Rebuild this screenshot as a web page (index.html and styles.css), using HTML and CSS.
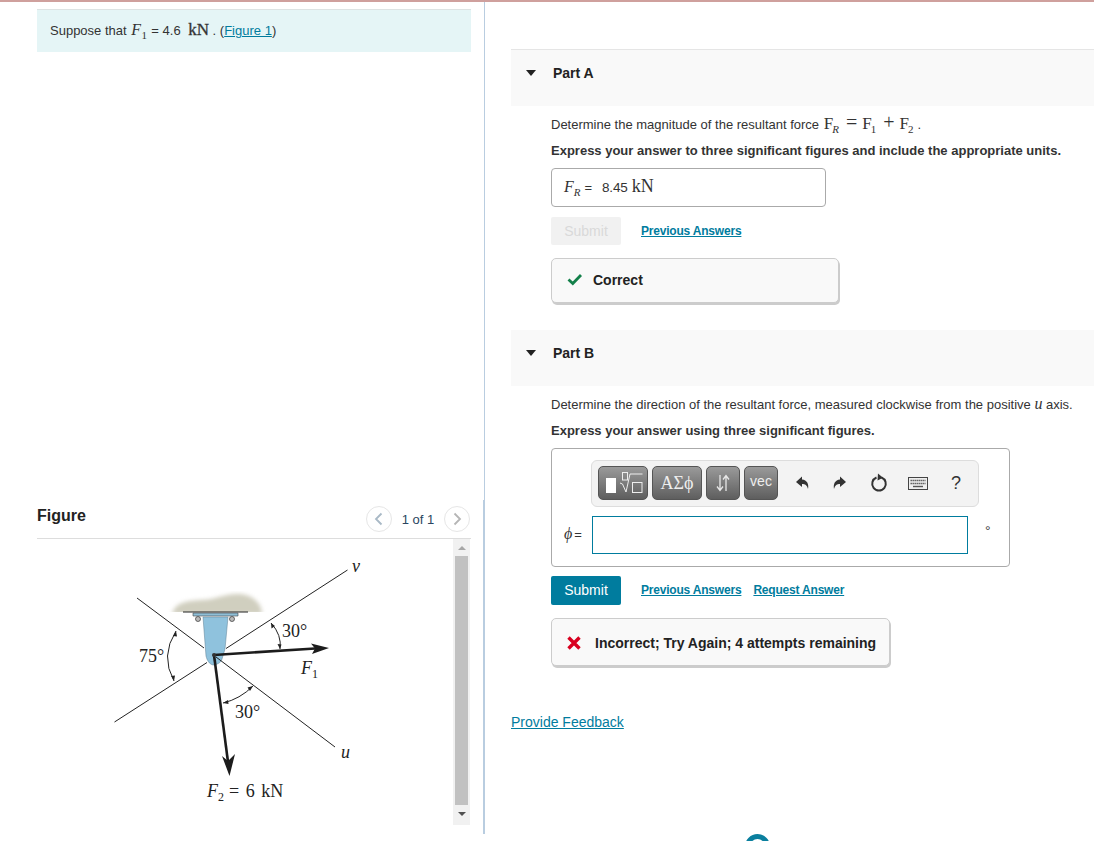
FILE: index.html
```html
<!DOCTYPE html>
<html lang="en">
<head>
<meta charset="utf-8">
<title>Part A and Part B</title>
<link rel="stylesheet" href="styles.css">
</head>
<body>
<div class="top-rule"></div>
<main class="main">
  <section class="left">
    <div class="prompt">Suppose that <span class="math math-f1"><i>F</i><sub>1</sub></span> = 4.6 <span class="math unit">kN</span> . (<a href="#">Figure 1</a>)</div>
    <div class="figure-head">
      <h2 class="figure-title">Figure</h2>
      <div class="pager">
        <span class="page-btn"><svg width="12" height="14" viewBox="0 0 12 14"><path d="M8.500 1.500 3 7l5.500 5.500" fill="none" stroke="#a9b9c6" stroke-width="1.800"/></svg></span>
        <span class="page-count">1 of 1</span>
        <span class="page-btn"><svg width="12" height="14" viewBox="0 0 12 14"><path d="M3.500 1.500 9 7l-5.500 5.500" fill="none" stroke="#b5b5b5" stroke-width="1.800"/></svg></span>
      </div>
    </div>
    <div class="figure-body">
      <svg class="diagram" width="416" height="286" viewBox="37 539 416 286">
        <defs>
          <filter id="soft"><feGaussianBlur stdDeviation="2"/></filter>
          <clipPath id="ceil"><rect x="160" y="585" width="110" height="27"/></clipPath>
        </defs>
        <g clip-path="url(#ceil)"><path d="M172 614C175 603 185 601 200 600 215 600 225 593 240 594 252 595 262 603 262 614z" fill="#d0cfbf" filter="url(#soft)"/></g>
        <path d="M183 612h65" stroke="#222" stroke-width="1"/>
        <path d="M193 613h45v3h-45z" fill="#8fbfd8" stroke="#444" stroke-width=".6"/>
        <circle cx="198" cy="619" r="2.500" fill="#bbb" stroke="#333" stroke-width=".7"/>
        <circle cx="232" cy="619" r="2.500" fill="#bbb" stroke="#333" stroke-width=".7"/>
        <path d="M203 617h25l-3 32-3 10c-1 4-6 6-9 6-4-1-6-5-7-9z" fill="#8fc2dd" stroke="#5d7f92" stroke-width=".5"/>
        <g fill="none" stroke="#222" stroke-width="1">
          <path d="M114.500 722 207 662.500M226 648.500 347.500 570"/>
          <path d="M137 598 204 648M216 657 335 747"/>
          <path d="M176 631Q160 656 174 681"/>
          <path d="M271 623Q282 635 280 649"/>
          <path d="M253 686Q240 699 223 703"/>
        </g>
        <g fill="#222">
          <path d="M176 631l-3 5 4 .5zM174 681l-3-5 4-.5zM271 623l.500 5.500 3.500-2.500zM280 649l-2.500-5 4 .5zM253 686l-5.500 1.500 2.500 3.500zM223 703l5-3 .500 4z"/>
        </g>
        <path d="M214 655 315 648.500" stroke="#1c1c1c" stroke-width="2.600"/>
        <path d="M329 648 311 643.500 315 648.500 312 654z" fill="#1c1c1c"/>
        <path d="M214 655 228 762" stroke="#1c1c1c" stroke-width="2.600"/>
        <path d="M229.500 776 222 756 228 761 235 754z" fill="#1c1c1c"/>
        <circle cx="214" cy="655" r="2" fill="#333"/>
        <g class="fig-text">
          <text x="352" y="572" font-style="italic">v</text>
          <text x="341" y="758" font-style="italic">u</text>
          <text x="282" y="637">30°</text>
          <text x="301" y="674" font-style="italic">F<tspan class="fig-sub" dy="4" font-style="normal">1</tspan></text>
          <text x="139" y="662">75°</text>
          <text x="235" y="718">30°</text>
          <text x="207" y="797" font-style="italic">F<tspan class="fig-sub" dy="4" font-style="normal">2</tspan><tspan class="fig-eq" dy="-4" dx="5" font-style="normal">= 6 kN</tspan></text>
        </g>
      </svg>
      <div class="scrollbar">
        <span class="arrow-up"></span>
        <span class="thumb"></span>
        <span class="arrow-down"></span>
      </div>
    </div>
  </section>
  <div class="divider"></div>
  <section class="right">
    <div class="part-head part-first"><span class="caret"></span><h3 class="part-title">Part A</h3></div>
    <div class="part-body">
      <p class="line">Determine the magnitude of the resultant force <span class="math eqn">F<sub><i>R</i></sub><span class="op">=</span>F<sub>1</sub><span class="op">+</span>F<sub>2</sub></span><span class="dot">.</span></p>
      <p class="line gap strong">Express your answer to three significant figures and include the appropriate units.</p>
      <div class="answer"><span class="math"><i>F<sub>R</sub></i></span> <span class="eq">=</span> <span class="val">8.45</span> <span class="math unit-answer">kN</span></div>
      <div class="actions first-actions">
        <span class="btn btn-off">Submit</span>
        <a class="act-link" href="#">Previous Answers</a>
      </div>
      <div class="feedback fb-ok">
        <svg width="16" height="13" viewBox="0 0 16 13"><path d="M1.500 6.500 5.800 10.500 14 2" fill="none" stroke="#13804a" stroke-width="2.800"/></svg>
        <span>Correct</span>
      </div>
    </div>
    <div class="part-head part-second"><span class="caret"></span><h3 class="part-title">Part B</h3></div>
    <div class="part-body">
      <p class="line">Determine the direction of the resultant force, measured clockwise from the positive <span class="math"><i>u</i></span> axis.</p>
      <p class="line gap strong">Express your answer using three significant figures.</p>
      <div class="editor">
        <div class="toolbar">
          <span class="tool tool-tmpl">
            <svg width="40" height="28" viewBox="0 0 40 28"><rect x="3" y="9" width="10" height="15" fill="#fff"/><g fill="none" stroke="#eee" stroke-width="1"><rect x="29.500" y="13.500" width="9.500" height="10"/><rect x="19.500" y="3.500" width="5" height="7.500"/><path d="M17 14l2.500 1 3.500 8 4-18h12.500"/></g></svg>
          </span>
          <span class="tool tool-greek">ΑΣϕ</span>
          <span class="tool tool-arrows"><svg width="16" height="20" viewBox="0 0 16 20"><g fill="none" stroke="#e8e8e8" stroke-width="1.300"><path d="M5 2v15M2 13.500l3 4 3-4M11 18V3M8 6.500l3-4 3 4"/></g></svg></span>
          <span class="tool tool-vec">vec</span>
          <span class="tool-icons">
            <svg width="16" height="16" viewBox="0 0 16 16"><path d="M7 1.500 1 7l6 5V9c3 0 5 1 6 5 1-5-1-9-6-9.500z" fill="#333"/></svg>
            <svg width="16" height="16" viewBox="0 0 16 16"><path d="M9 1.500 15 7l-6 5V9c-3 0-5 1-6 5-1-5 1-9 6-9.500z" fill="#333"/></svg>
            <svg class="icon-reset" width="18" height="20" viewBox="0 0 18 20"><path d="M11.500 4.500a6.800 6.800 0 1 1-5 0" fill="none" stroke="#333" stroke-width="2"/><path d="M8 .500 13 4.800 7.500 7.500z" fill="#333"/></svg>
            <svg width="20" height="13" viewBox="0 0 20 13"><rect x=".5" y=".5" width="19" height="12" fill="#eee" stroke="#444"/><path d="M2.500 3.500h15M2.500 6.500h15" stroke="#555" stroke-width="1.400" stroke-dasharray="1.400 .6"/><path d="M5 9.500h10" stroke="#555" stroke-width="1.400"/></svg>
            <span class="help">?</span>
          </span>
        </div>
        <div class="input-row">
          <span class="phi"><i>ϕ</i><span class="eq">=</span></span>
          <span class="text-input"></span>
          <span class="degree">°</span>
        </div>
      </div>
      <div class="actions second-actions">
        <span class="btn btn-on">Submit</span>
        <a class="act-link" href="#">Previous Answers</a>
        <a class="act-link" href="#">Request Answer</a>
      </div>
      <div class="feedback fb-bad">
        <svg width="14" height="14" viewBox="0 0 14 14"><path d="M1.500 1.500 12.500 12.500M12.500 1.500 1.500 12.500" stroke="#d8001f" stroke-width="3.400"/></svg>
        <span>Incorrect; Try Again; 4 attempts remaining</span>
      </div>
    </div>
    <a class="provide" href="#">Provide Feedback</a>
  </section>
</main>
<span class="help-bubble"></span>
</body>
</html>
```
FILE: styles.css
```css
* { box-sizing: border-box; }
html, body { margin: 0; padding: 0; height: 841px; overflow: hidden; background: #fff; }
body { font-family: "Liberation Sans", Arial, sans-serif; font-size: 14px; color: #333; position: relative; }
a { color: #007c9e; }
p, h2, h3 { margin: 0; }

.top-rule { height: 2px; background: #cfa09d; }
.main { display: flex; height: 832px; }

.left { width: 483px; padding: 7px 12px 0 37px; flex: none; }
.prompt { height: 43px; border-top: 1px solid #dde3e3; background: #e5f5f6; padding-left: 13px; line-height: 41px; white-space: nowrap; font-size: 13px; }
.math { font-family: "Liberation Serif", serif; font-size: 16px; line-height: 0; }
.math sub { font-size: 11px; line-height: 0; }
.math-f1 { margin-left: 1px; letter-spacing: .6px; }
.math.unit { font-size: 17px; margin-left: 4px; -webkit-text-stroke: .3px #333; }

.figure-head { margin-top: 454px; height: 33px; border-bottom: 1px solid #ddd; display: flex; justify-content: space-between; align-items: flex-start; }
.figure-title { font-size: 16px; line-height: 18px; font-weight: bold; color: #222; margin-top: 1px; }
.pager { display: flex; align-items: center; margin-right: 1px; }
.page-btn { width: 26px; height: 26px; border: 1px solid #e6e6e6; border-radius: 50%; display: flex; align-items: center; justify-content: center; }
.page-count { font-size: 13px; width: 52px; text-align: center; color: #2a4560; padding-top: 1px; }

.figure-body { display: flex; height: 286px; }
.diagram { flex: none; display: block; }
.fig-text { font-family: "Liberation Serif", serif; font-size: 18px; fill: #222; }
.fig-sub { font-size: 12px; }
.fig-eq { word-spacing: 2px; }
.scrollbar { width: 17px; background: #f1f1f1; display: flex; flex-direction: column; align-items: center; }
.thumb { width: 13px; height: 249px; background: #c1c1c1; margin-top: 6px; }
.arrow-up, .arrow-down { width: 0; height: 0; border-left: 4px solid transparent; border-right: 4px solid transparent; }
.arrow-up { border-bottom: 4px solid #a6a6a6; margin-top: 7px; }
.arrow-down { border-top: 4px solid #505050; margin-top: 7px; }

.divider { width: 2px; flex: none; background: linear-gradient(#b9cde0, #b9cde0) right top / 1px 100% no-repeat, linear-gradient(#b9cde0, #b9cde0) left 498px / 1px 100% no-repeat; }

.right { flex: 1; padding-left: 26px; min-width: 0; }
.part-head { height: 56px; background: #f9f9f9; display: flex; align-items: flex-start; padding: 15px 0 0 15px; }
.part-first { height: 57px; margin-top: 47px; border-top: 1px solid #e5e5e5; }
.part-second { margin-top: 27px; }
.caret { width: 0; height: 0; border-left: 5.500px solid transparent; border-right: 5.500px solid transparent; border-top: 6px solid #222; margin-top: 5px; }
.part-title { font-size: 14px; line-height: 16px; font-weight: bold; color: #222; margin-left: 17px; }

.part-body { padding-left: 40px; padding-top: 8px; }
.line { height: 20px; padding-top: 1px; line-height: 20px; white-space: nowrap; font-size: 13px; }
.eqn { font-size: 17px; margin-left: 1px; }
.eqn sub { margin: 0 2px 0 -1px; }
.op { font-size: 20px; line-height: 0; margin: 0 5px; }
.dot { margin-left: 2px; }
.gap { margin-top: 6px; }
.strong { font-weight: bold; }

.answer { margin-top: 8px; width: 275px; height: 39px; border: 1px solid #aaa; border-radius: 4px; padding-left: 12px; line-height: 36px; white-space: nowrap; font-size: 14px; }
.eq { font-size: 13px; }
.val { font-size: 13.500px; margin-left: 6px; letter-spacing: -.1px; }
.unit-answer { font-size: 18px; }

.actions { display: flex; align-items: flex-start; }
.first-actions { margin-top: 10px; }
.second-actions { margin-top: 9px; }
.btn { width: 70px; height: 28px; line-height: 28px; text-align: center; border-radius: 2px; font-size: 14px; }
.btn-off { background: #f1f1f1; color: #d9d9d9; }
.btn-on { background: #007c9e; color: #fff; height: 29px; line-height: 29px; }
.act-link { font-size: 12px; font-weight: bold; line-height: 14px; margin-left: 20px; margin-top: 7px; white-space: nowrap; letter-spacing: -.2px; }
.act-link + .act-link { margin-left: 12px; }

.feedback { margin-top: 13px; background: #f9f9f9; border: 1px solid #ccc; border-radius: 5px; box-shadow: 1px 2px 0 #ccc; display: flex; align-items: center; font-weight: bold; color: #222; white-space: nowrap; }
.fb-ok { width: 288px; height: 45px; padding: 0 0 2px 15px; gap: 10px; }
.fb-bad { width: 339px; height: 48px; padding: 1px 0 0 15px; gap: 14px; }

.editor { margin-top: 8px; width: 459px; height: 119px; border: 1px solid #aaa; border-radius: 4px; padding: 11px 0 0 39px; }
.toolbar { width: 388px; height: 47px; border: 1px solid #ddd; border-radius: 6px; background: #f3f3f3; display: flex; align-items: flex-start; padding: 5px 0 0 6px; gap: 4px; }
.tool { height: 34px; border: 1px solid #555; border-radius: 5px; background: linear-gradient(#9a9a9a, #5e5e5e); color: #eee; display: flex; align-items: center; justify-content: center; }
.tool-tmpl { width: 50px; }
.tool-greek { width: 50px; font-family: "Liberation Serif", serif; font-size: 18px; }
.tool-arrows { width: 34px; }
.tool-vec { width: 34px; font-size: 14px; padding-bottom: 4px; }
.tool-icons { display: flex; align-items: center; height: 34px; margin-left: 13px; gap: 20px; }
.icon-reset { margin-left: 3px; }
.help { font-size: 18px; color: #333; margin-left: 3px; }

.input-row { display: flex; align-items: flex-start; margin-top: 9px; margin-left: -39px; }
.phi { width: 40px; padding-left: 12px; line-height: 36px; font-family: "Liberation Serif", serif; font-size: 16px; white-space: nowrap; }
.phi .eq { font-family: "Liberation Sans", sans-serif; margin-left: 2px; }
.text-input { width: 376px; height: 38px; border: 1px solid #007c9e; background: #fff; display: block; }
.degree { margin-left: 17px; font-size: 14px; line-height: 30px; color: #444; }

.provide { display: inline-block; margin-top: 46px; line-height: 20px; white-space: nowrap; }

.help-bubble { position: absolute; left: 745px; top: 834px; width: 25px; height: 25px; border-radius: 50%; border: 5px solid #0a7f9e; }
```
